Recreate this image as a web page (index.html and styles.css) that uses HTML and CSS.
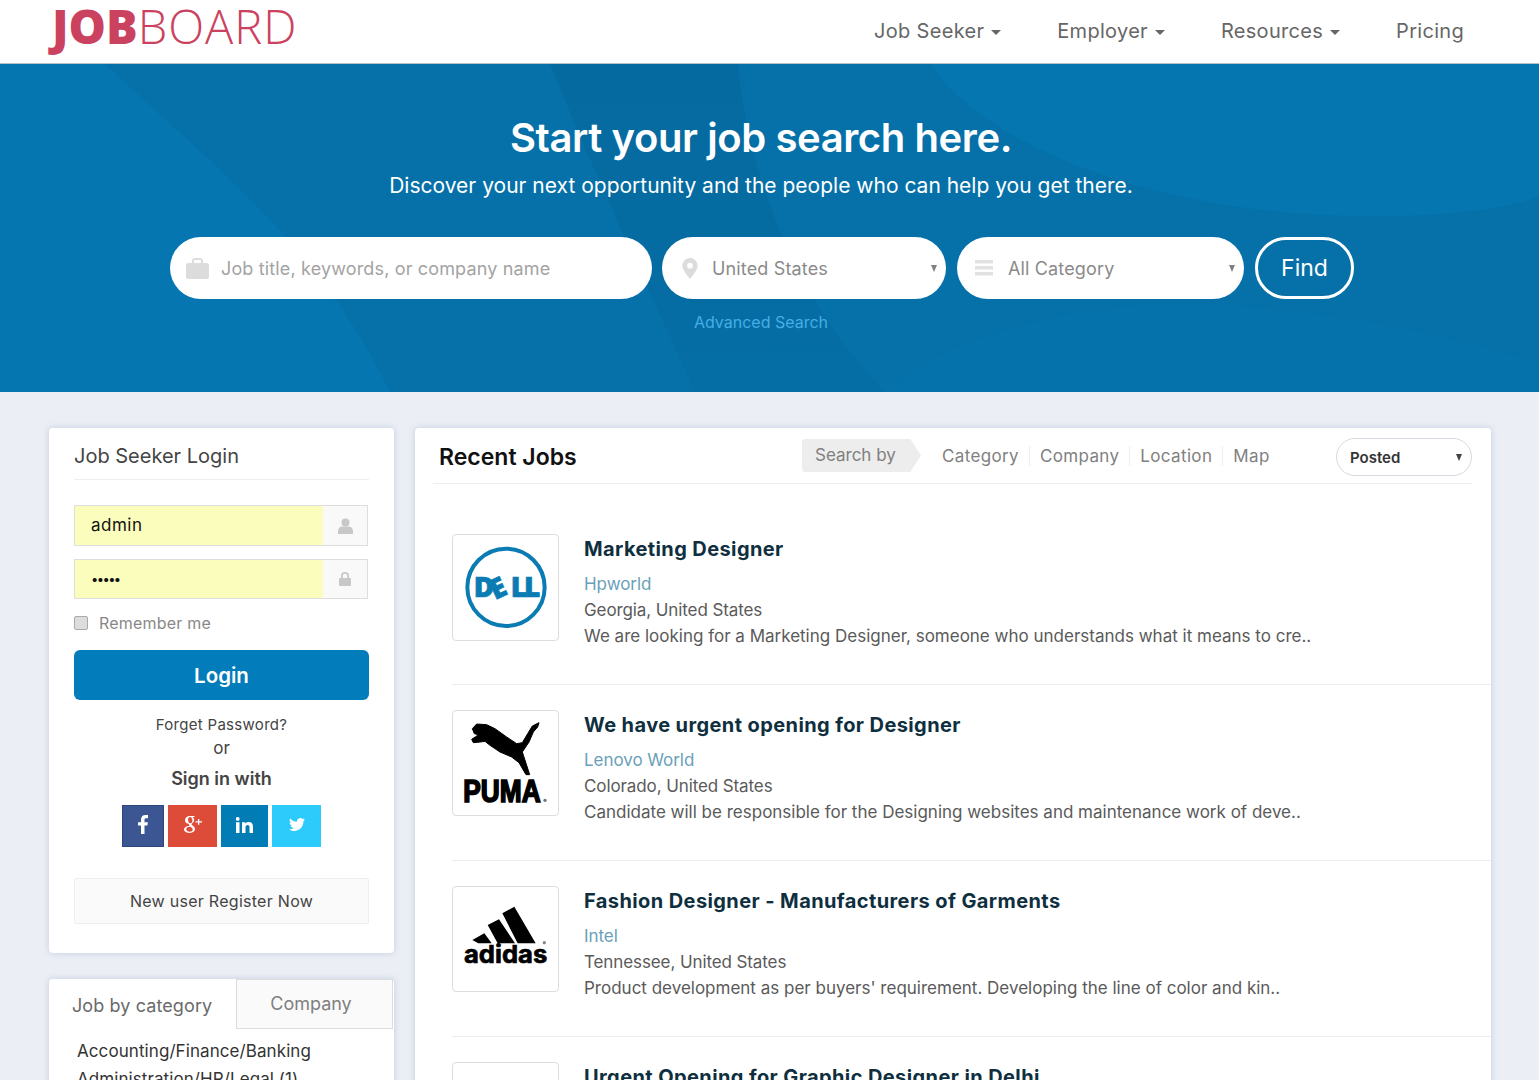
FILE: index.html
```html
<!DOCTYPE html>
<html lang="en">
<head>
  <meta charset="UTF-8">
  <meta name="viewport" content="width=device-width, initial-scale=1.0">
  <title>Job Board</title>
  <link rel="stylesheet" href="styles.css">
</head>
<body>
  <header class="topbar">
    <a class="logo" href="#"><b>JOB</b>BOARD</a>
    <nav class="topnav">
      <a href="#">Job Seeker<i class="caret"></i></a>
      <a href="#">Employer<i class="caret"></i></a>
      <a href="#">Resources<i class="caret"></i></a>
      <a href="#">Pricing</a>
    </nav>
  </header>

  <section class="hero">
    <svg class="hero-bg" viewBox="0 0 1539 328" preserveAspectRatio="none" aria-hidden="true">
      <defs>
        <linearGradient id="band" x1="0" y1="0" x2="0" y2="1">
          <stop offset="0" stop-color="#056a9f"/>
          <stop offset="1" stop-color="#056ea5"/>
        </linearGradient>
      </defs>
      <path d="M0 0H105C200 90 320 180 390 328H0Z" fill="#0576b0"/>
      <path d="M550 0H738C750 120 800 240 885 328H695C650 230 590 100 550 0Z" fill="url(#band)"/>
      <path d="M930 0H1539V133C1500 145 1450 152 1380 152C1200 155 1000 100 930 0Z" fill="#0576b0"/>
      <path d="M885 328C950 270 1080 238 1200 240C1320 245 1450 270 1539 300V328Z" fill="#0572ab"/>
    </svg>
    <div class="hero-inner">
      <h1>Start your job search here.</h1>
      <p class="hero-sub">Discover your next opportunity and the people who can help you get there.</p>
      <form class="search">
        <label class="pill pill-job">
          <svg class="pill-icon" width="23" height="21" viewBox="0 0 23 21"><path d="M6 6V3C6 1.300 7.300 0 9 0h5c1.700 0 3 1.300 3 3v3h-2V3.200c0-.7-.4-1.200-1.200-1.200H9.200C8.400 2 8 2.500 8 3.200V6Z" fill="#dcdcdc"/><rect y="5" width="23" height="16" rx="2.500" fill="#dcdcdc"/></svg>
          <span class="placeholder">Job title, keywords, or company name</span>
        </label>
        <label class="pill pill-loc">
          <svg class="pill-icon" width="16" height="21" viewBox="0 0 16 22"><path fill-rule="evenodd" d="M8 0a8 8 0 0 1 8 8c0 4.500-5 10-8 14-3-4-8-9.500-8-14a8 8 0 0 1 8-8Zm0 5a3 3 0 1 0 0 6 3 3 0 0 0 0-6Z" fill="#dcdcdc"/></svg>
          <span class="select-text">United States</span>
          <i class="arrow"></i>
        </label>
        <label class="pill pill-cat">
          <svg class="pill-icon" width="18" height="16" viewBox="0 0 18 16"><path d="M0 0h18v3.500H0zM0 6h18v3.500H0zM0 12h18v3.500H0z" fill="#e2e2e2"/></svg>
          <span class="select-text">All Category</span>
          <i class="arrow"></i>
        </label>
        <button class="find" type="button">Find</button>
      </form>
      <a class="advanced" href="#">Advanced Search</a>
    </div>
  </section>

  <main class="content">
    <aside class="sidebar">
      <div class="card login">
        <h3 class="login-title">Job Seeker Login</h3>
        <div class="field">
          <span class="field-input">admin</span>
          <span class="field-addon">
            <svg width="15" height="16" viewBox="0 0 15 16"><circle cx="7.500" cy="4.500" r="4" fill="#c8c8c8"/><path d="M0 16v-3c0-2.500 2-4.500 4-4.500h7c2 0 4 2 4 4.500v3Z" fill="#c8c8c8"/></svg>
          </span>
        </div>
        <div class="field field-pass">
          <span class="field-input dots">•••••</span>
          <span class="field-addon">
            <svg width="12" height="14" viewBox="0 0 12 14"><path d="M2 6V4a4 4 0 0 1 8 0v2H8.200V4a2.200 2.200 0 0 0-4.400 0v2Z" fill="#c8c8c8"/><rect y="6" width="12" height="8" rx="1" fill="#c8c8c8"/></svg>
          </span>
        </div>
        <label class="remember"><i class="check"></i>Remember me</label>
        <button class="login-btn" type="button">Login</button>
        <a class="forgot" href="#">Forget Password?</a>
        <div class="or">or</div>
        <div class="signin">Sign in with</div>
        <div class="socials">
          <a class="soc soc-fb" href="#">
            <svg width="10" height="19" viewBox="0 0 10 19"><path d="M3 19V10.500H0V7.200h3V4.700C3 1.700 4.700 0 7.400 0H10v3.200H8.200C6.900 3.200 6.500 3.800 6.500 5v2.200h3.400l-.5 3.300H6.500V19Z" fill="#fff"/></svg>
          </a>
          <a class="soc soc-gp" href="#">
            <svg width="18" height="17" viewBox="0 0 18 17"><path d="M6 0h5.200L9.800.9H8.500c1.200.8 1.700 1.900 1.700 3.100 0 1.400-.8 2.300-1.700 3-.6.500-.9.800-.9 1.300s.4.900 1 1.300c1.300 1 2.400 1.800 2.400 3.500 0 2.200-2.100 3.900-5.100 3.900C2.400 16.900 0 15.700 0 13.700c0-2.300 2.500-3.700 5.600-3.700-.4-.5-.7-1-.7-1.500 0-.3.100-.5.200-.8C2.500 7.900 1 6 1 4.200 1 2 3 0 6 0Zm.3 1C4.800 1 4 2.200 4 3.700c0 1.900 1.100 3.500 2.500 3.500 1.300 0 1.900-1.100 1.900-2.500C8.400 2.900 7.500 1 6.300 1ZM5.800 10.800c-2.200 0-3.500 1-3.500 2.500s1.400 2.500 3.300 2.500c2 0 3.100-1 3.100-2.300 0-1.200-.9-1.800-2.400-2.700ZM14 3h1.300v2.300H18v1.200h-2.700v2.300H14V6.500h-2.400V5.300H14Z" fill="#fff"/></svg>
          </a>
          <a class="soc soc-in" href="#">
            <svg width="17" height="16" viewBox="0 0 17 16"><path d="M0 5.200h3.500V16H0ZM1.700 0a1.900 1.900 0 1 1 0 3.800 1.900 1.900 0 0 1 0-3.800ZM6 5.200h3.400v1.500C10 5.700 11.200 5 12.700 5 15.700 5 17 6.800 17 10v6h-3.500v-5.500c0-1.500-.5-2.500-1.800-2.500-1.400 0-2.200 1-2.200 2.500V16H6Z" fill="#fff"/></svg>
          </a>
          <a class="soc soc-tw" href="#">
            <svg width="16" height="13" viewBox="0 0 16 13"><path d="M16 1.500c-.6.300-1.200.4-1.900.5.700-.4 1.200-1 1.400-1.800-.6.400-1.300.7-2 .8A3.300 3.300 0 0 0 7.900 3.800C5.200 3.700 2.800 2.400 1.100.4.200 2 .7 3.800 2.100 4.800c-.5 0-1-.2-1.500-.4 0 1.600 1.100 2.900 2.600 3.200-.5.100-1 .2-1.500.1.400 1.300 1.600 2.200 3.100 2.300A6.600 6.600 0 0 1 0 11.400 9.300 9.300 0 0 0 14.400 3.200c.6-.4 1.200-1 1.600-1.700Z" fill="#fff"/></svg>
          </a>
        </div>
        <a class="register" href="#">New user Register Now</a>
      </div>

      <div class="card browse">
        <div class="tabs">
          <a class="tab tab-on" href="#">Job by category</a>
          <a class="tab tab-off" href="#">Company</a>
        </div>
        <ul class="cat-list">
          <li>Accounting/Finance/Banking</li>
          <li>Administration/HR/Legal (1)</li>
        </ul>
      </div>
    </aside>

    <section class="card jobs">
      <div class="jobs-head">
        <h2>Recent Jobs</h2>
        <div class="search-by">
          <span class="search-tag">Search by</span>
          <a href="#">Category</a>
          <a href="#">Company</a>
          <a href="#">Location</a>
          <a href="#">Map</a>
        </div>
        <div class="sort">Posted<i class="arrow arrow-dark"></i></div>
      </div>

      <article class="job">
        <div class="job-logo">
          <svg width="105" height="105" viewBox="24 30 315 315">
            <circle cx="183" cy="187" r="116" fill="none" stroke="#0a7cb3" stroke-width="12"/>
            <text class="dell-text" y="215"><tspan x="86">D</tspan><tspan x="150" dy="11" rotate="-25">E</tspan><tspan x="197" dy="-11">L</tspan><tspan x="237">L</tspan></text>
          </svg>
        </div>
        <div class="job-info">
          <h4>Marketing Designer</h4>
          <a class="company" href="#">Hpworld</a>
          <div class="loc">Georgia, United States</div>
          <p>We are looking for a Marketing Designer, someone who understands what it means to cre..</p>
        </div>
      </article>

      <article class="job">
        <div class="job-logo">
          <svg width="105" height="105" viewBox="24 27 315 315">
            <path d="M95 66 125 68 150 80 185 105 215 125 232 122 248 95 262 72 282 62 278 75 265 90 252 120 232 150 245 190 254 218 243 218 222 182 200 165 165 150 135 130 120 118 105 120 85 122 80 112 92 104 100 98 88 95 82 80Z" fill="#000" stroke="#000" stroke-width="3" stroke-linejoin="round"/>
            <text class="puma-text" x="55" y="299" textLength="232" lengthAdjust="spacingAndGlyphs">PUMA</text>
            <circle cx="300" cy="295" r="5" fill="#777"/>
          </svg>
        </div>
        <div class="job-info">
          <h4>We have urgent opening for Designer</h4>
          <a class="company" href="#">Lenovo World</a>
          <div class="loc">Colorado, United States</div>
          <p>Candidate will be responsible for the Designing websites and maintenance work of deve..</p>
        </div>
      </article>

      <article class="job">
        <div class="job-logo">
          <svg width="105" height="105" viewBox="24 21 315 315">
            <path d="M82 180 118 160 140 190 100 190ZM128 135 162 118 210 190 158 190ZM172 100 208 80 272 190 218 190Z" fill="#000"/>
            <text class="adidas-text" x="57" y="249" textLength="250" lengthAdjust="spacingAndGlyphs">adidas</text>
            <circle cx="298" cy="188" r="5" fill="#888"/>
          </svg>
        </div>
        <div class="job-info">
          <h4>Fashion Designer - Manufacturers of Garments</h4>
          <a class="company" href="#">Intel</a>
          <div class="loc">Tennessee, United States</div>
          <p>Product development as per buyers' requirement. Developing the line of color and kin..</p>
        </div>
      </article>

      <article class="job">
        <div class="job-logo"></div>
        <div class="job-info">
          <h4>Urgent Opening for Graphic Designer in Delhi</h4>
        </div>
      </article>
    </section>
  </main>
</body>
</html>
```

FILE: styles.css
```css
* {
  box-sizing: border-box;
}

html, body {
  height: 1080px;
  overflow: hidden;
}

body {
  margin: 0;
  font-family: Inter, 'Noto Sans', Arial, sans-serif;
  background: #ebeef4;
  color: #333;
}

a {
  color: inherit;
  text-decoration: none;
}

/* header */
.topbar {
  height: 64px;
  background: #fff;
  border-bottom: 1px solid #b9c0c5;
  display: flex;
  justify-content: space-between;
  padding: 0 75px 0 52px;
}

.logo {
  font-family: 'Open Sans', sans-serif;
  font-size: 47px;
  line-height: 52px;
  letter-spacing: 1px;
  color: #cb4260;
  font-weight: 300;
}

.logo b {
  font-weight: 800;
  letter-spacing: 0;
}

.topnav {
  display: flex;
  align-items: center;
  gap: 56px;
  font-size: 20px;
  letter-spacing: 0.3px;
  color: #666;
  padding-bottom: 2px;
}

.caret {
  display: inline-block;
  margin-left: 7px;
  vertical-align: middle;
  border-top: 5px solid #666;
  border-left: 5px solid transparent;
  border-right: 5px solid transparent;
}

/* hero */
.hero {
  position: relative;
  height: 328px;
  background: #0671a9;
  color: #fff;
  overflow: hidden;
}

.hero-bg {
  position: absolute;
  inset: 0;
  width: 100%;
  height: 100%;
}

.hero-inner {
  position: relative;
  display: flex;
  flex-direction: column;
  align-items: center;
  padding: 50px 17px 0 0;
}

.hero h1 {
  margin: 0;
  font-size: 40px;
  line-height: 48px;
  font-weight: 600;
  letter-spacing: -0.4px;
}

.hero-sub {
  margin: 11px 0 0;
  font-size: 21px;
  line-height: 26px;
}

.search {
  display: flex;
  margin-top: 38px;
  margin-left: 2px;
}

.pill {
  height: 62px;
  background: #fff;
  border-radius: 31px;
  display: flex;
  align-items: center;
  font-size: 18px;
  letter-spacing: 0.15px;
  color: #8a8a8a;
  position: relative;
}

.pill-job {
  width: 482px;
  padding-left: 16px;
  margin-right: 10px;
}

.pill-loc {
  width: 284px;
  padding-left: 20px;
  margin-right: 11px;
}

.pill-cat {
  width: 287px;
  padding-left: 18px;
  margin-right: 11px;
}

.pill-icon {
  flex: none;
}

.pill-job .pill-icon {
  margin-right: 12px;
}

.pill-loc .pill-icon {
  margin-right: 14px;
}

.pill-cat .pill-icon {
  margin-right: 15px;
}

.placeholder {
  color: #a3a3a3;
}

.arrow {
  position: absolute;
  right: 9px;
  top: 28px;
  border-top: 7px solid #808080;
  border-left: 3.5px solid transparent;
  border-right: 3.5px solid transparent;
}

.arrow-dark {
  border-top-color: #444;
  right: 9px;
  top: 15px;
}

.find {
  width: 99px;
  height: 62px;
  background: transparent;
  border: 3px solid #fff;
  border-radius: 31px;
  color: #fff;
  font: inherit;
  font-size: 23px;
  font-weight: 400;
}

.advanced {
  margin-top: 12px;
  font-size: 16px;
  line-height: 22px;
  color: #46aee6;
}

/* main */
.content {
  display: flex;
  align-items: flex-start;
  gap: 21px;
  padding: 36px 48px 0 49px;
}

.card {
  background: #fff;
  border-radius: 4px;
  box-shadow: 0 0 6px rgba(120, 145, 200, 0.35);
}

.sidebar {
  width: 345px;
  flex: none;
  display: flex;
  flex-direction: column;
  gap: 26px;
}

.login {
  height: 525px;
  padding: 12px 25px 0;
}

.login-title {
  margin: 0 0 25px;
  padding-bottom: 7px;
  height: 40px;
  font-size: 20px;
  line-height: 32px;
  font-weight: 400;
  color: #444;
  border-bottom: 1px solid #eceef0;
}

.field {
  display: flex;
  height: 41px;
  margin: 0 0 13px;
  width: 294px;
  border: 1px solid #dedede;
}

.field-pass {
  height: 40px;
  margin-bottom: 0;
}

.field-input {
  flex: 1;
  background: #fbfdbc;
  padding-left: 16px;
  font-size: 17px;
  letter-spacing: 0.5px;
  line-height: 38px;
  color: #111;
}

.dots {
  letter-spacing: -1.6px;
  font-size: 13px;
}

.field-addon {
  width: 44px;
  background: #f9f9f9;
  display: flex;
  align-items: center;
  justify-content: center;
}

.remember {
  display: flex;
  align-items: center;
  height: 24px;
  margin-top: 12px;
  font-size: 16px;
  letter-spacing: 0.2px;
  color: #888;
}

.check {
  width: 14px;
  height: 14px;
  margin-right: 11px;
  background: #ddd;
  border: 1px solid #aaa;
  border-radius: 2px;
}

.login-btn {
  width: 295px;
  height: 50px;
  margin-top: 15px;
  background: #027cba;
  border: 0;
  border-radius: 6px;
  color: #fff;
  font: inherit;
  font-size: 20.5px;
  font-weight: 600;
}

.forgot,
.or,
.signin {
  display: block;
  text-align: center;
}

.forgot {
  margin-top: 13px;
  font-size: 15px;
  letter-spacing: 0.3px;
  line-height: 23px;
  color: #444;
}

.or {
  font-size: 17px;
  line-height: 24px;
  color: #444;
}

.signin {
  margin-top: 7px;
  font-size: 18px;
  line-height: 24px;
  font-weight: 600;
  color: #444;
}

.socials {
  display: flex;
  justify-content: center;
  gap: 4px;
  margin-top: 14px;
}

.soc {
  height: 42px;
  padding-bottom: 3px;
  display: flex;
  align-items: center;
  justify-content: center;
}

.soc-fb {
  width: 42px;
  background: #3b5692;
  border: 1px solid #2f4778;
}

.soc-gp {
  width: 49px;
  background: #dd4b39;
}

.soc-in {
  width: 47px;
  background: #027cb5;
}

.soc-tw {
  width: 49px;
  background: #2ccbfc;
}

.register {
  display: block;
  width: 295px;
  height: 46px;
  margin-top: 31px;
  background: #fafafa;
  border: 1px solid #eee;
  border-radius: 2px;
  text-align: center;
  font-size: 16px;
  letter-spacing: 0.28px;
  line-height: 44px;
  color: #444;
}

.browse {
  height: 200px;
}

.tabs {
  display: flex;
  height: 50px;
}

.tab {
  font-size: 18px;
  color: #6a6a6a;
}

.tab-on {
  width: 188px;
  padding-left: 23px;
  line-height: 54px;
  letter-spacing: 0.1px;
  border-right: 1px solid #ddd;
}

.tab-off {
  width: 156px;
  padding-right: 7px;
  text-align: center;
  background: #fafafa;
  border: 1px solid #ddd;
  border-left: 0;
  line-height: 48px;
  color: #808080;
}

.cat-list {
  list-style: none;
  margin: 8px 0 0;
  padding: 0 0 0 28px;
  font-size: 17px;
  letter-spacing: 0.08px;
  line-height: 28px;
  color: #333;
}

/* jobs */
.jobs {
  width: 1076px;
  height: 700px;
  padding: 0 0 0 18px;
}

.jobs-head {
  position: relative;
  display: flex;
  align-items: center;
  height: 56px;
  margin-right: 19px;
  border-bottom: 1px solid #eceef0;
}

.jobs-head h2 {
  width: 363px;
  margin: 2px 0 0 6px;
  font-size: 23px;
  font-weight: 600;
  color: #111;
}

.search-by {
  display: flex;
  align-items: center;
  font-size: 17px;
  letter-spacing: 0.35px;
  color: #808080;
}

.search-tag {
  width: 119px;
  height: 33px;
  margin-right: 11px;
  padding-left: 13px;
  line-height: 33px;
  letter-spacing: 0;
  background: #ededed;
  clip-path: polygon(0 0, 91% 0, 100% 50%, 91% 100%, 0 100%);
  border-radius: 3px 0 0 3px;
}

.search-by a {
  padding: 0 10px;
  border-right: 1px solid #eee;
}

.search-by a:last-child {
  border-right: 0;
}

.sort {
  position: absolute;
  right: 0;
  top: 10px;
  width: 136px;
  height: 38px;
  padding-left: 13px;
  border: 1px solid #d5dbe0;
  border-radius: 19px;
  font-size: 15px;
  font-weight: 600;
  line-height: 37px;
  color: #333;
}

.job {
  display: flex;
  height: 176px;
  margin-left: 19px;
  padding-top: 50px;
  border-bottom: 1px solid #eceef0;
}

.job:first-of-type {
  height: 201px;
}

.job + .job {
  padding-top: 25px;
}

.job-logo {
  flex: none;
  width: 107px;
  height: 107px;
  margin-right: 25px;
  border: 1px solid #ddd;
  border-radius: 4px;
  overflow: hidden;
}

.job + .job .job-logo {
  height: 106px;
}

.job-logo svg {
  display: block;
}

.job-info h4 {
  margin: 0;
  font-size: 20px;
  letter-spacing: 0.4px;
  line-height: 30px;
  font-weight: 700;
  color: #0f2f3f;
}

.company {
  display: block;
  margin-top: 7px;
  font-size: 17px;
  letter-spacing: -0.05px;
  line-height: 26px;
  color: #6a9fb9;
}

.loc,
.job-info p {
  font-size: 17px;
  line-height: 26px;
  color: #5a5a5a;
  margin: 0;
}

.loc {
  letter-spacing: -0.1px;
}

.dell-text {
  font-family: 'Open Sans', sans-serif;
  font-weight: 800;
  font-size: 84px;
  fill: #0a7cb3;
  stroke: #0a7cb3;
  stroke-width: 2px;
}

.puma-text {
  font-family: 'Liberation Sans', sans-serif;
  font-weight: 700;
  font-size: 92px;
  fill: #000;
  stroke: #000;
  stroke-width: 5px;
}

.adidas-text {
  font-family: Inter, sans-serif;
  font-weight: 700;
  font-size: 74px;
  fill: #000;
  stroke: #000;
  stroke-width: 2px;
}
```
